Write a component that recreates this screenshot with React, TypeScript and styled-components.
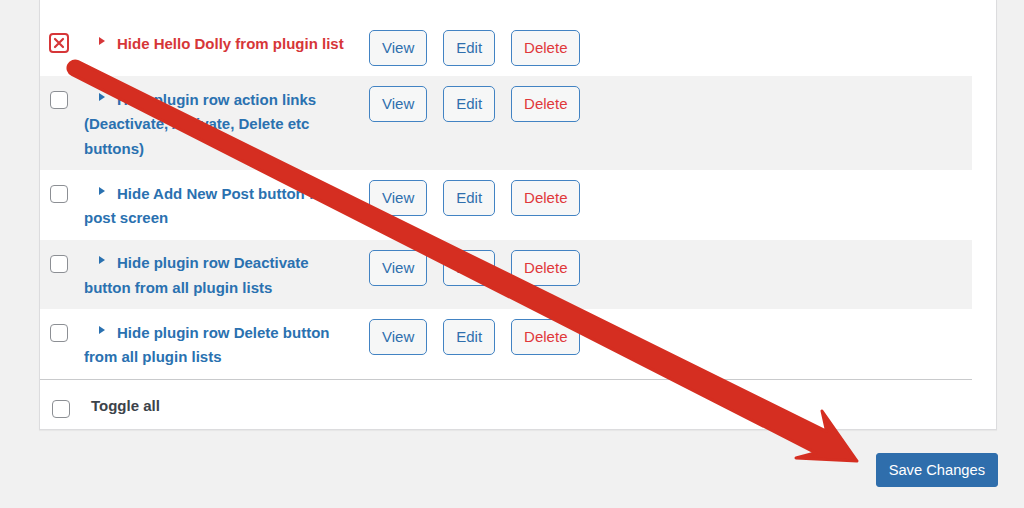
import React from "react";
import styled, { createGlobalStyle } from "styled-components";

const Global = createGlobalStyle`
  html, body { margin: 0; padding: 0; background: #f1f1f1; }
  body { font-family: "Liberation Sans", Arial, sans-serif; }
  * { box-sizing: border-box; }
`;

const Page = styled.div`
  position: relative;
  width: 1024px;
  height: 508px;
  overflow: hidden;
  background: #f1f1f1;
`;

const Panel = styled.div`
  box-sizing: content-box;
  margin-left: 39px;
  width: 932px;
  padding: 20px 24px 0 0;
  background: #fff;
  border: 1px solid #dcdcde;
  border-top: none;
  box-shadow: 0 1px 1px rgba(0, 0, 0, 0.04);
`;

const Row = styled.div<{ $striped?: boolean }>`
  display: flex;
  align-items: flex-start;
  background: ${(p) => (p.$striped ? "#f2f2f2" : "#fff")};
`;

const CheckCell = styled.div`
  flex: 0 0 44px;
  padding: 15px 0 0 10px;
`;

const Checkbox = styled.span<{ $checked?: boolean }>`
  display: flex;
  align-items: center;
  justify-content: center;
  width: ${(p) => (p.$checked ? "20px" : "18px")};
  height: ${(p) => (p.$checked ? "20px" : "18px")};
  margin: ${(p) => (p.$checked ? "-2px 0 0 -1px" : "0")};
  border: ${(p) => (p.$checked ? "2px solid #d63638" : "1px solid #8c8f94")};
  border-radius: 4px;
  background: #fff;
`;

const TextCell = styled.div<{ $active?: boolean }>`
  flex: 0 0 268px;
  padding: 11.5px 0 9px;
  font-size: 15px;
  font-weight: 700;
  line-height: 24.5px;
  color: ${(p) => (p.$active ? "#d63638" : "#2a71b0")};
`;

const Marker = styled.span<{ $active?: boolean }>`
  display: inline-block;
  width: 0;
  height: 0;
  margin: 0 12px 0 15px;
  vertical-align: 4px;
  border-left: 6px solid ${(p) => (p.$active ? "#d63638" : "#2a71b0")};
  border-top: 4px solid transparent;
  border-bottom: 4px solid transparent;
`;

const Actions = styled.div`
  display: flex;
  gap: 16px;
  margin-left: 17px;
  padding: 10px 0;
`;

const ActionButton = styled.button<{ $danger?: boolean }>`
  height: 36px;
  padding: 0 12px;
  border: 1px solid #4283c3;
  border-radius: 5px;
  background: #f6f7f7;
  font-family: "Liberation Sans", Arial, sans-serif;
  font-size: 15px;
  line-height: 34px;
  color: ${(p) => (p.$danger ? "#e0383b" : "#2f6fad")};
`;

const ToggleRow = styled.div`
  display: flex;
  align-items: flex-start;
  height: 50px;
  border-top: 1px solid #c9cacc;
`;

const ToggleBox = styled(Checkbox)`
  margin: 20px 0 0 12px;
`;

const ToggleLabel = styled.span`
  margin-left: 21px;
  padding-top: 16px;
  font-size: 15px;
  font-weight: 700;
  line-height: 20px;
  color: #3c434a;
`;

const Footer = styled.div`
  display: flex;
  justify-content: flex-end;
  padding: 23px 26px 0 0;
`;

const SaveButton = styled.button`
  height: 34px;
  padding: 0 12px;
  border: 1px solid #2f6eac;
  border-radius: 3px;
  background: #2f6eac;
  color: #fff;
  font-family: "Liberation Sans", Arial, sans-serif;
  font-size: 14.7px;
  line-height: 32px;
`;

const Overlay = styled.svg`
  position: absolute;
  top: 0;
  left: 0;
  pointer-events: none;
`;

type Item = { label: string };

const items: Item[] = [
  { label: "Hide Hello Dolly from plugin list" },
  { label: "Hide plugin row action links (Deactivate, Activate, Delete etc buttons)" },
  { label: "Hide Add New Post button from post screen" },
  { label: "Hide plugin row Deactivate button from all plugin lists" },
  { label: "Hide plugin row Delete button from all plugin lists" },
];

const XMark = () => (
  <svg width="12" height="12" viewBox="0 0 12 12">
    <path d="M2 2 L10 10 M10 2 L2 10" stroke="#d63638" strokeWidth="2.2" strokeLinecap="round" />
  </svg>
);

export default function App() {
  return (
    <Page>
      <Global />
      <Panel>
        {items.map((it, i) => {
          const active = i === 0;
          return (
            <Row key={it.label} $striped={i % 2 === 1}>
              <CheckCell>
                <Checkbox $checked={active}>{active && <XMark />}</Checkbox>
              </CheckCell>
              <TextCell $active={active}>
                <Marker $active={active} />
                {it.label}
              </TextCell>
              <Actions>
                <ActionButton>View</ActionButton>
                <ActionButton>Edit</ActionButton>
                <ActionButton $danger>Delete</ActionButton>
              </Actions>
            </Row>
          );
        })}
        <ToggleRow>
          <ToggleBox />
          <ToggleLabel>Toggle all</ToggleLabel>
        </ToggleRow>
      </Panel>
      <Footer>
        <SaveButton>Save Changes</SaveButton>
      </Footer>
      <Overlay width="1024" height="508" viewBox="0 0 1024 508">
        <path
          d="M78.1 61.7 L826.6 431.4 L822 411 L857 461 L796 458 L815.8 452.8 L71.9 74.3 A7 7 0 0 1 78.1 61.7 Z"
          fill="#d52e21"
          stroke="#d52e21"
          strokeWidth="3"
          strokeLinejoin="round"
        />
      </Overlay>
    </Page>
  );
}
